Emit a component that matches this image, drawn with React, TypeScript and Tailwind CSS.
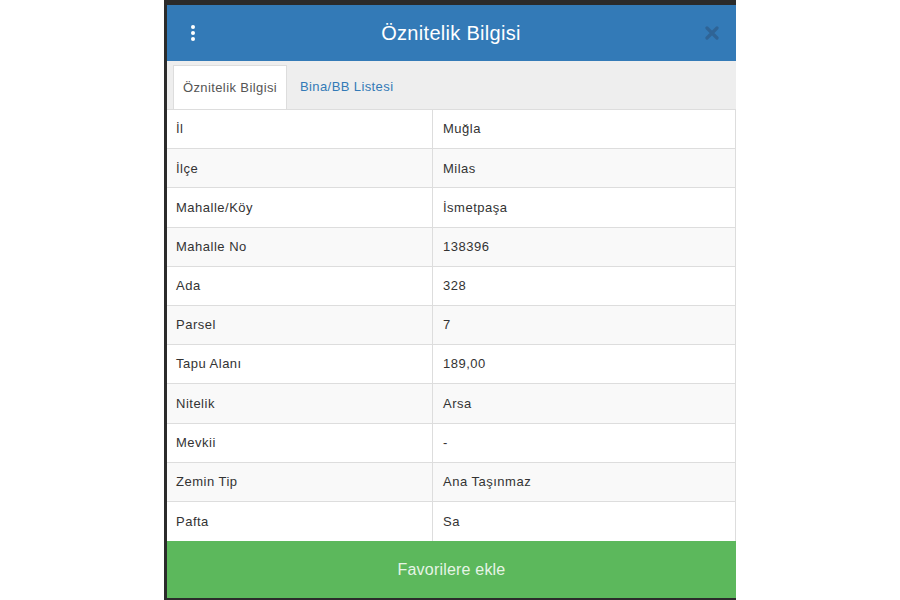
import React from "react";

const rows: [string, string][] = [
    ["İl", "Muğla"],
    ["İlçe", "Milas"],
    ["Mahalle/Köy", "İsmetpaşa"],
    ["Mahalle No", "138396"],
    ["Ada", "328"],
    ["Parsel", "7"],
    ["Tapu Alanı", "189,00"],
    ["Nitelik", "Arsa"],
    ["Mevkii", "-"],
    ["Zemin Tip", "Ana Taşınmaz"],
    ["Pafta", "Sa"],
];

export default function App() {
    return (
        <div className="w-[900px] h-[600px] bg-white overflow-hidden" style={{ fontFamily: '"Liberation Sans", Arial, sans-serif' }}>
            <div className="ml-[164px] w-[572px] h-[600px] bg-[#2b2b2b] pt-[5px] pl-[3px] flex flex-col">
                {/* header */}
                <div className="h-[56px] bg-[#337ab7] flex items-center justify-between px-[22px] shrink-0">
                    <div className="flex flex-col gap-[2px] w-[8px] items-center">
                        <span className="block w-[4px] h-[4px] rounded-full bg-white" />
                        <span className="block w-[4px] h-[4px] rounded-full bg-white" />
                        <span className="block w-[4px] h-[4px] rounded-full bg-white" />
                    </div>
                    <div className="text-white text-[20px] tracking-[0.3px]">Öznitelik Bilgisi</div>
                    <svg width="14" height="14" viewBox="0 0 14 14" className="mr-[-5px]">
                        <path d="M2 2 L12 12 M12 2 L2 12" stroke="#2f6496" strokeWidth="3.2" strokeLinecap="round" />
                    </svg>
                </div>

                {/* tabs */}
                <div className="h-[49px] bg-[#eeeeee] pt-[5px] pl-[6px] flex items-end border-b border-[#dddddd] shrink-0">
                    <div className="h-[44px] w-[114px] bg-white border border-[#dddddd] border-b-0 flex items-center justify-center text-[13px] tracking-[0.4px] text-[#555555]">
                        Öznitelik Bilgisi
                    </div>
                    <div className="h-[44px] px-[13px] flex items-center text-[13px] tracking-[0.4px] text-[#337ab7]">Bina/BB Listesi</div>
                </div>

                {/* table */}
                <div className="bg-white flex flex-col border-r border-[#dddddd] shrink-0">
                    {rows.map(([k, v], i) => (
                        <div
                            key={k}
                            className={
                                "h-[39.2px] flex text-[13px] tracking-[0.5px] text-[#333333] border-b border-[#dddddd] last:border-b-0 " +
                                (i % 2 === 1 ? "bg-[#f9f9f9]" : "bg-white")
                            }
                        >
                            <div className="w-[266px] pl-[9px] flex items-center border-r border-[#dddddd]">{k}</div>
                            <div className="flex-1 pl-[10px] flex items-center">{v}</div>
                        </div>
                    ))}
                </div>

                {/* button */}
                <div className="h-[57px] bg-[#5cb85c] flex items-center justify-center text-[16px] tracking-[0.2px] text-[#e6f4e6] shrink-0">
                    Favorilere ekle
                </div>
            </div>
        </div>
    );
}
